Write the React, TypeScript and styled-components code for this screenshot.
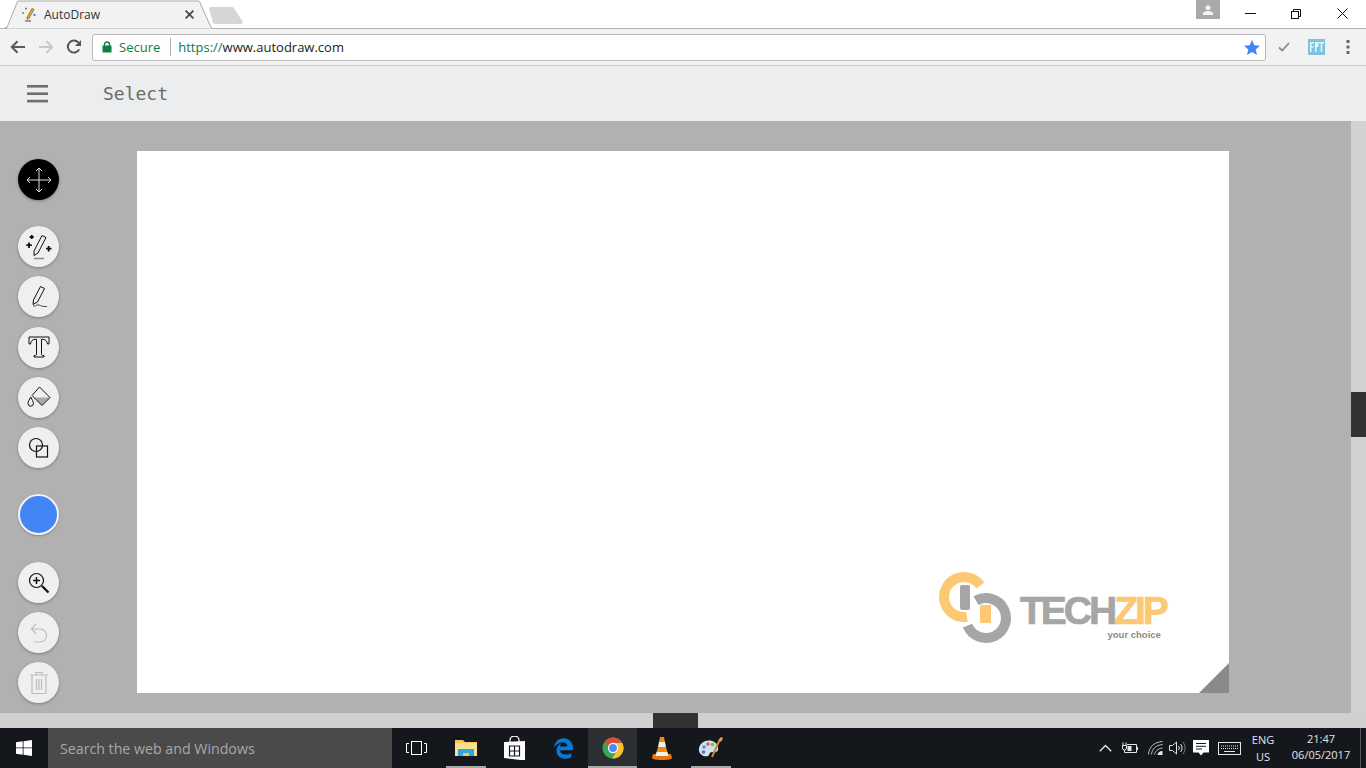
import styled, { createGlobalStyle } from 'styled-components';
import { FaEdgeLegacy } from 'react-icons/fa6';

const GlobalStyle = createGlobalStyle`
  html, body {
    margin: 0;
    padding: 0;
    overflow: hidden;
    background: #b1b1b1;
    font-family: 'Open Sans', 'Liberation Sans', sans-serif;
  }
`;

const Screen = styled.div`
  width: 1366px;
  height: 768px;
  display: flex;
  flex-direction: column;
  overflow: hidden;
`;

/* browser chrome */
const TabStrip = styled.div`
  height: 28px;
  flex-shrink: 0;
  padding-right: 1px;
  display: flex;
  background: #fff;
  border-bottom: 1px solid #b4b4b4;
`;

const Tab = styled.div`
  position: relative;
  width: 207px;
  height: 29px;
  margin-left: 5px;
  padding-left: 17px;
  box-sizing: border-box;
  display: flex;
  align-items: center;
  font-size: 12px;
  color: #333;
  z-index: 1;
`;

const TabShape = styled.svg`
  position: absolute;
  left: 0;
  top: 0;
  z-index: -1;
`;

const TabTitle = styled.span`
  margin-left: 7px;
  flex: 1;
`;

const TabClose = styled.svg`
  margin-right: 18px;
`;

const NewTab = styled.svg`
  margin: 7px 0 0 -3px;
`;

const UserBadge = styled.div`
  width: 24px;
  height: 19px;
  margin-left: auto;
  margin-right: 7px;
  background: #a9a9a9;
  display: flex;
  align-items: center;
  justify-content: center;
`;

const WindowButton = styled.div`
  width: 46px;
  height: 27px;
  display: flex;
  align-items: center;
  justify-content: center;
`;

const Toolbar = styled.div`
  height: 36px;
  flex-shrink: 0;
  padding: 0 4px;
  display: flex;
  align-items: center;
  background: #f2f2f2;
  border-bottom: 1px solid #c8c8c8;
`;

const NavSlot = styled.div`
  width: 28px;
  height: 28px;
  display: flex;
  align-items: center;
  justify-content: center;
`;

const Omnibox = styled.div`
  flex: 1;
  height: 27px;
  box-sizing: border-box;
  margin: 0 4px;
  padding: 0 5px 0 9px;
  display: flex;
  align-items: center;
  background: #fff;
  border: 1px solid #b8b8b8;
  border-radius: 3px;
  font-size: 13px;
`;

const SecureLabel = styled.span`
  margin-left: 7px;
  padding-right: 10px;
  border-right: 1px solid #b0b0b0;
  line-height: 18px;
  color: #0b8043;
`;

const Url = styled.span`
  margin-left: 7px;
  flex: 1;
  color: #222;
`;

const UrlScheme = styled.span`
  color: #0b7a50;
`;

const ExtensionGroup = styled.div`
  display: flex;
  gap: 4px;
`;

/* autodraw */
const AppBar = styled.div`
  height: 55px;
  flex-shrink: 0;
  display: flex;
  align-items: center;
  padding-left: 27px;
  box-sizing: border-box;
  background: #ecedef;
`;

const PageTitle = styled.h1`
  margin: 0 0 0 55px;
  font-family: 'DejaVu Sans Mono', 'Liberation Mono', monospace;
  font-size: 18px;
  font-weight: 400;
  color: #6a6a6a;
`;

const Workspace = styled.div`
  height: 607px;
  flex-shrink: 0;
  display: grid;
  grid-template-columns: 1351px 15px;
  grid-template-rows: 592px 15px;
`;

const Stage = styled.div`
  display: flex;
  background: #b1b1b1;
`;

const Sidebar = styled.div`
  width: 137px;
  flex-shrink: 0;
  box-sizing: border-box;
  padding: 38px 0 0 18px;
  display: flex;
  flex-direction: column;
  gap: 26px;
`;

const ToolGroup = styled.div<{ $gap: number }>`
  display: flex;
  flex-direction: column;
  gap: ${(p) => p.$gap}px;
`;

const ToolButton = styled.button<{ $active?: boolean; $off?: boolean }>`
  width: 41px;
  height: 41px;
  padding: 0;
  border: 0;
  border-radius: 50%;
  display: flex;
  align-items: center;
  justify-content: center;
  background: ${(p) => (p.$active ? '#000' : '#efefef')};
  color: ${(p) => (p.$active ? '#ddd' : p.$off ? '#bdbdbd' : '#111')};
  box-shadow: 0 1px 3px rgba(0, 0, 0, 0.3);
`;

const ColorSwatch = styled.div`
  width: 41px;
  height: 41px;
  margin-bottom: 1px;
  box-sizing: border-box;
  border-radius: 50%;
  border: 2px solid #f4f4f4;
  background: #4285f4;
  box-shadow: 0 1px 2px rgba(0, 0, 0, 0.25);
`;

const Canvas = styled.div`
  position: relative;
  width: 1092px;
  height: 542px;
  margin-top: 30px;
  background: #fff;
`;

const PageCorner = styled.div`
  position: absolute;
  right: 0;
  bottom: 0;
  width: 30px;
  height: 30px;
  background: #8a8a8a;
  clip-path: polygon(100% 0, 100% 100%, 0 100%);
`;

const Watermark = styled.div`
  position: absolute;
  left: 802px;
  top: 421px;
  display: flex;
`;

const WatermarkText = styled.div`
  margin: 24px 0 0 7px;
  display: flex;
  flex-direction: column;
  align-items: flex-end;
`;

const Brand = styled.div`
  font-family: 'Liberation Sans', Arial, sans-serif;
  font-size: 39px;
  line-height: 30px;
  font-weight: 700;
  letter-spacing: -3px;
  -webkit-text-stroke: 0.7px currentColor;
  color: #a6a6a6;
`;

const BrandAccent = styled.span`
  color: #fdc874;
`;

const Tagline = styled.div`
  margin: 3px 5px 0 0;
  font-family: 'Liberation Sans', Arial, sans-serif;
  font-size: 9.5px;
  line-height: 12px;
  font-weight: 700;
  color: #8a8a8a;
`;

const VerticalTrack = styled.div`
  background: #d2d2d2;
  padding-top: 271px;
`;

const VerticalThumb = styled.div`
  height: 45px;
  background: #333;
`;

const HorizontalTrack = styled.div`
  grid-column: 1 / 3;
  background: #d0d0d0;
  padding-left: 653px;
`;

const HorizontalThumb = styled.div`
  width: 45px;
  height: 15px;
  background: #333;
`;

/* windows taskbar */
const Taskbar = styled.div`
  height: 40px;
  flex-shrink: 0;
  display: flex;
  align-items: center;
  background: #14181d;
  color: #fff;
`;

const StartButton = styled.div`
  width: 48px;
  display: flex;
  justify-content: center;
`;

const SearchBox = styled.div`
  width: 344px;
  height: 40px;
  box-sizing: border-box;
  padding-left: 12px;
  display: flex;
  align-items: center;
  background: #4a4a4a;
  color: #a8a8a8;
  font-size: 14.2px;
`;

const TaskSlot = styled.div<{ $open?: boolean; $active?: boolean }>`
  position: relative;
  width: 49px;
  height: 40px;
  display: flex;
  align-items: center;
  justify-content: center;
  background: ${(p) => (p.$active ? '#2c2f32' : 'transparent')};
  &::after {
    content: '';
    display: ${(p) => (p.$open ? 'block' : 'none')};
    position: absolute;
    bottom: 0;
    left: ${(p) => (p.$active ? 0 : '5px')};
    right: ${(p) => (p.$active ? 0 : '4px')};
    height: 2px;
    background: #a8a8a8;
  }
`;

const Tray = styled.div`
  margin-left: auto;
  display: flex;
  align-items: center;
  height: 40px;
`;

const TraySlot = styled.div<{ $width: number }>`
  width: ${(p) => p.$width}px;
  height: 40px;
  display: flex;
  flex-direction: column;
  align-items: center;
  justify-content: center;
  font-size: 11px;
  line-height: 17px;
  color: #e4e4e4;
`;

const ClockSlot = styled(TraySlot)`
  line-height: 16px;
  padding-bottom: 2px;
  box-sizing: border-box;
`;

const ShowDesktop = styled.div`
  width: 5px;
  height: 40px;
  margin-left: 1px;
  border-left: 1px solid #555;
`;

/* drawings */
const Favicon = () => (
  <svg width="15" height="15" viewBox="0 0 15 15">
    <path d="M5 10.5 10 1.5l2 1-5 9-2 .8z" fill="#f4b400" stroke="#444" strokeWidth=".6" />
    <path d="M3 14h6" stroke="#444" strokeWidth="1" />
    <circle cx="1" cy="6" r="1" fill="#34a853" />
    <circle cx="4" cy="1.5" r="1" fill="#ea4335" />
    <circle cx="12.5" cy="8" r="1.2" fill="#4285f4" />
  </svg>
);

const BackArrow = ({ color }: { color: string }) => (
  <svg width="16" height="14" viewBox="0 0 16 14" fill="none" stroke={color} strokeWidth="2">
    <path d="M15 7H2M7.5 1.2 1.8 7l5.7 5.8" />
  </svg>
);

const ForwardArrow = ({ color }: { color: string }) => (
  <svg width="16" height="14" viewBox="0 0 16 14" fill="none" stroke={color} strokeWidth="2">
    <path d="M1 7h13M8.5 1.2 14.2 7l-5.7 5.8" />
  </svg>
);

const Reload = () => (
  <svg width="16" height="16" viewBox="0 0 16 16" fill="none">
    <path d="M13.2 10.4A6 6 0 1 1 12.4 3.600" stroke="#555" strokeWidth="2" />
    <path d="M15 1v6H9z" fill="#555" />
  </svg>
);

const Lock = () => (
  <svg width="10" height="12" viewBox="0 0 10 12">
    <path d="M2.500 5V3.500a2.500 2.500 0 0 1 5 0V5" fill="none" stroke="#0b8043" strokeWidth="1.400" />
    <rect x="0.500" y="4.500" width="9" height="7" fill="#0b8043" />
  </svg>
);

const Star = () => (
  <svg width="16" height="15" viewBox="0 0 16 15">
    <path d="M8 0l2.300 5.200 5.700.5-4.300 3.700 1.300 5.600L8 12l-5 3 1.300-5.600L0 5.700l5.700-.5z" fill="#4285f4" />
  </svg>
);

const Check = () => (
  <svg width="12" height="10" viewBox="0 0 12 10" fill="none" stroke="#8a8a8a" strokeWidth="1.800">
    <path d="M1 5.500 4.200 8.500 11 1" />
  </svg>
);

const ExtensionLogo = () => (
  <svg width="17" height="16" viewBox="0 0 17 16">
    <rect width="17" height="16" fill="#7cc4de" />
    <path d="M2 3h4v1.500H3.500V7H5.500v1.500H3.500V13H2zM7 3h3.500v5H8.500v5H7zM11 3h5v1.500h-1.700V13h-1.600V4.500H11z" fill="#e8f6fb" />
  </svg>
);

const MenuDots = () => (
  <svg width="4" height="14" viewBox="0 0 4 14" fill="#666">
    <rect x="0.500" width="3" height="3" />
    <rect x="0.500" y="5.500" width="3" height="3" />
    <rect x="0.500" y="11" width="3" height="3" />
  </svg>
);

const Hamburger = () => (
  <svg width="21" height="18" viewBox="0 0 21 18" fill="#6e6e6e">
    <rect width="21" height="2.600" />
    <rect y="7.400" width="21" height="2.600" />
    <rect y="14.800" width="21" height="2.600" />
  </svg>
);

const MoveIcon = () => (
  <svg width="26" height="26" viewBox="0 0 26 26" fill="none" stroke="currentColor" strokeWidth="1">
    <path d="M13 1v24M1 13h24M10 4l3-3 3 3M10 22l3 3 3-3M4 10l-3 3 3 3M22 10l3 3-3 3" />
  </svg>
);

const AutoDrawIcon = () => (
  <svg width="26" height="26" viewBox="0 0 26 26" fill="none" stroke="currentColor" strokeWidth="1">
    <path d="M8 17 16 1.500 20 3.500 12 19 8 21.500z" />
    <path d="M8 24.500h10" stroke="#888" strokeWidth="1.500" />
    <path d="M5.700 1v4M3.700 3h4M3 8.500v5.500M.300 11.200h5.500M22.700 12v5.500M20 14.700h5.500" strokeWidth="1.800" />
  </svg>
);

const PencilIcon = () => (
  <svg width="26" height="26" viewBox="0 0 26 26" fill="none" stroke="currentColor" strokeWidth="1">
    <path d="M7.500 16 14.500 2.500 18.500 4.500 11.500 18 7 20.500z" />
    <path d="M7 21.500c2 2 3.500-1.500 6-.5s3 1.500 8 1.500" stroke="#444" />
  </svg>
);

const TextIcon = () => (
  <svg width="22" height="22" viewBox="0 0 22 22" fill="none" stroke="currentColor" strokeWidth="1">
    <path d="M1 1h20v7h-1.500C19 5 17.500 3.200 13.500 3.200V18.500c0 .8 1 1.200 2.500 1.200V21H6v-1.300c1.500 0 2.500-.4 2.500-1.200V3.200C4.500 3.200 3 5 2.500 8H1z" />
  </svg>
);

const FillIcon = () => (
  <svg width="26" height="26" viewBox="0 0 26 26" fill="none" stroke="currentColor" strokeWidth="1">
    <path d="M8 13.500H24L16 21.500z" fill="#aaa" stroke="none" />
    <path d="M13.500 3 24 13.500 16 21.500 6 11.500z" />
    <path d="M4.700 13c-1.500 3-2.700 4.500-2.700 6.500a2.700 2.700 0 0 0 5.400 0C7.400 17.500 6.200 16 4.700 13z" />
  </svg>
);

const ShapesIcon = () => (
  <svg width="24" height="24" viewBox="0 0 24 24" fill="none" stroke="currentColor" strokeWidth="1.200">
    <circle cx="9" cy="9" r="6.500" />
    <rect x="9.500" y="10" width="11" height="11" />
  </svg>
);

const ZoomIcon = () => (
  <svg width="22" height="22" viewBox="0 0 22 22" fill="none" stroke="currentColor" strokeWidth="1.200">
    <circle cx="8.500" cy="8.500" r="7" />
    <path d="M8.500 5v7M5 8.500h7" strokeWidth="1.500" />
    <path d="M14 14l6.500 6.500" strokeWidth="2.200" />
  </svg>
);

const UndoIcon = () => (
  <svg width="20" height="22" viewBox="0 0 20 22" fill="none" stroke="currentColor" strokeWidth="1.200">
    <path d="M7 2 2.500 6.800 7 11.500M3 7h8a6.500 6.500 0 0 1 0 13H5" />
  </svg>
);

const TrashIcon = () => (
  <svg width="20" height="24" viewBox="0 0 20 24" fill="none" stroke="currentColor" strokeWidth="1.200">
    <path d="M1 4h18M7 4V1.500h6V4M3 4v18.500h14V4M7.500 8v11M10 8v11M12.500 8v11" />
  </svg>
);

const TechZipMark = () => (
  <svg width="74" height="74" viewBox="0 0 74 74" fill="none">
    <path d="M41.400 13.500A20 20 0 1 0 28 44.800" stroke="#fdc874" strokeWidth="10" />
    <path d="M37 28.700A20 20 0 1 1 28.500 53.700" stroke="#a6a6a6" strokeWidth="10" />
    <rect x="21" y="13" width="10" height="25" rx="2" fill="#a6a6a6" />
    <rect x="41" y="33" width="11" height="18" fill="#fdc874" />
  </svg>
);

const WindowsLogo = () => (
  <svg width="16" height="16" viewBox="0 0 16 16" fill="#fff">
    <path d="M0 2.300 6.700 1.300V7.500H0zM7.500 1.200 16 0v7.500H7.500zM0 8.300h6.700v6.400L0 13.700zM7.500 8.300H16V16L7.500 14.800z" />
  </svg>
);

const TaskViewIcon = () => (
  <svg width="21" height="14" viewBox="0 0 21 14" fill="none" stroke="#fff" strokeWidth="1">
    <rect x="5.500" y="0.500" width="10" height="13" />
    <path d="M3 2.500H.5v9H3M18 2.500h2.500v9H18" />
  </svg>
);

const ExplorerIcon = () => (
  <svg width="22" height="18" viewBox="0 0 22 18">
    <path d="M0 1h8l2 2h12v14H0z" fill="#f3c75a" />
    <path d="M0 4h22v13H0z" fill="#fbe08c" />
    <path d="M3 10h16v7h-5v-3H8v3H3z" fill="#29abe2" />
    <path d="M8 14h6v3H8z" fill="#f3c75a" />
  </svg>
);

const StoreIcon = () => (
  <svg width="22" height="24" viewBox="0 0 22 24" fill="#fff">
    <path d="M6 6V4a4 3.500 0 0 1 9 0v2" fill="none" stroke="#fff" strokeWidth="1.200" />
    <path d="M0 6l21-1v19l-3 .2L0 22z" />
    <path d="M5.500 10h10v10h-10zM10.500 10v10M5.500 15h10" fill="none" stroke="#14181d" strokeWidth="1.200" />
  </svg>
);

const ChromeIcon = () => (
  <svg width="22" height="22" viewBox="0 0 24 24">
    <circle cx="12" cy="12" r="11.500" fill="#34a853" />
    <path d="M21.960 6.250A11.500 11.500 0 0 1 10.800 23.440L16.800 14.750 12 6.500z" fill="#fbc02d" />
    <path d="M3.200 4.600A11.500 11.500 0 0 1 21.960 6.250H12a5.500 5.500 0 0 0-4.800 8.300z" fill="#dd4b39" />
    <circle cx="12" cy="12" r="5.600" fill="#fff" />
    <circle cx="12" cy="12" r="4.300" fill="#4e8df5" />
  </svg>
);

const VlcIcon = () => (
  <svg width="20" height="24" viewBox="0 0 20 24">
    <path d="M1 18h18l1 4c0 1-4 2-10 2S0 23 0 22z" fill="#e8770f" />
    <path d="M8 1h4l1 5H7z" fill="#f08a12" />
    <path d="M7 6h6l1 5H6z" fill="#f4f0e8" />
    <path d="M6 11h8l1.500 5H4.500z" fill="#f08a12" />
    <path d="M4.500 16h11l1 4h-13z" fill="#f4f0e8" />
  </svg>
);

const PaintIcon = () => (
  <svg width="25" height="24" viewBox="0 0 25 24">
    <path d="M1 15C0 8 7 3 14 5c4 1 7 5 6 9-1 3-4 2-6 2-3 0-2 3-4 4-4 1-8-1-9-5z" fill="#d3e2ea" />
    <circle cx="6" cy="11" r="1.800" fill="#3f9de0" />
    <circle cx="10" cy="8" r="1.800" fill="#e45f4a" />
    <circle cx="14.500" cy="8.500" r="1.800" fill="#7cbf4a" />
    <circle cx="5.500" cy="16" r="1.800" fill="#5a6fd0" />
    <path d="M14 21 22 3" stroke="#c98a2e" strokeWidth="2" />
    <path d="M21 4l2-3 2 1-2 4z" fill="#e0a84a" />
  </svg>
);

const CaretUp = () => (
  <svg width="13" height="8" viewBox="0 0 13 8" fill="none" stroke="#e6e6e6" strokeWidth="1.300">
    <path d="M.8 7.300 6.500 1.500l5.700 5.800" />
  </svg>
);

const BatteryIcon = () => (
  <svg width="16" height="13" viewBox="0 0 16 13" fill="none" stroke="#e6e6e6">
    <path d="M1 .5v3M4 .5v3M.5 3.500h4V6a2 2 0 0 1-4 0zM2.500 8v2.500H5" />
    <path d="M5 2.500h9.500v8H5" />
    <rect x="5.500" y="4" width="4" height="5" fill="#e6e6e6" stroke="none" />
    <path d="M15.500 5v3" />
  </svg>
);

const WifiIcon = () => (
  <svg width="15" height="14" viewBox="0 0 15 14" fill="none" stroke="#bdbdbd">
    <path d="M.5 13.500C1 6 6 1 14.500.5M3.500 13.500C4 8 8 4 14.500 3.500M6.500 13.500C7 10.500 10 7.500 14.500 7" />
    <path d="M9.500 14c0-2 2-4 5-4v4z" fill="#e6e6e6" stroke="none" />
  </svg>
);

const VolumeIcon = () => (
  <svg width="17" height="14" viewBox="0 0 17 14" fill="none" stroke="#e6e6e6">
    <path d="M.5 4.500h3L7.500 1v12L3.500 9.500h-3z" />
    <path d="M9.500 5a3 3 0 0 1 0 4M11.500 3a6 6 0 0 1 0 8" />
    <path d="M14 1a9.500 9.500 0 0 1 0 12" stroke="#777" />
  </svg>
);

const NotificationIcon = () => (
  <svg width="16" height="16" viewBox="0 0 16 16">
    <path d="M0 0h16v12.500h-5.500L8 15.500l-2.500-3H0z" fill="#fff" />
    <path d="M3 3.500h10M3 6.300h10M3 9h6" stroke="#14181d" />
  </svg>
);

const KeyboardIcon = () => (
  <svg width="23" height="13" viewBox="0 0 23 13" fill="none" stroke="#e6e6e6">
    <rect x="0.500" y="0.500" width="22" height="12" />
    <path d="M3 4h17M3 6.500h17" strokeDasharray="1 1" />
    <path d="M6 9.500h11" />
  </svg>
);

const tools = [AutoDrawIcon, PencilIcon, TextIcon, FillIcon, ShapesIcon];

export default function App() {
  return (
    <Screen>
      <GlobalStyle />
      <TabStrip>
        <Tab>
          <TabShape width="207" height="29" viewBox="0 0 207 29">
            <path d="M2 28.500 12.500 1.500Q13 1 14 1H193q1 0 1.500.5L207 28.500z" fill="#f2f2f2" />
            <path d="M0 27.500H2L12.500 1.500Q13 1 14 1H193q1 0 1.500.5L206 27.500h1" fill="none" stroke="#aaa" />
          </TabShape>
          <Favicon />
          <TabTitle>AutoDraw</TabTitle>
          <TabClose width="9" height="9" viewBox="0 0 9 9" stroke="#444" strokeWidth="1.700">
            <path d="M.6.600l7.800 7.800M8.400.600 .6 8.400" />
          </TabClose>
        </Tab>
        <NewTab width="34" height="17" viewBox="0 0 34 17">
          <path d="M2 0H23q1.500 0 2 1.500L34 15q0 2-2 2H6q-1.500 0-2-1.500L0 2q0-2 2-2z" fill="#d6d6d6" />
        </NewTab>
        <UserBadge>
          <svg width="10" height="10" viewBox="0 0 10 10" fill="#f2f2f2">
            <circle cx="5" cy="2.800" r="2.500" />
            <path d="M0 10V8c0-1 3-2 5-2s5 1 5 2v2z" />
          </svg>
        </UserBadge>
        <WindowButton>
          <svg width="11" height="1" viewBox="0 0 11 1"><rect width="11" height="1" fill="#111" /></svg>
        </WindowButton>
        <WindowButton>
          <svg width="10" height="10" viewBox="0 0 10 10" fill="none" stroke="#111">
            <rect x="0.500" y="2.500" width="7" height="7" />
            <path d="M2.500 2.500v-2h7v7h-2" />
          </svg>
        </WindowButton>
        <WindowButton>
          <svg width="11" height="11" viewBox="0 0 11 11" stroke="#111">
            <path d="M.5.500l10 10M10.500.500l-10 10" />
          </svg>
        </WindowButton>
      </TabStrip>

      <Toolbar>
        <NavSlot><BackArrow color="#5a5a5a" /></NavSlot>
        <NavSlot><ForwardArrow color="#c8c8c8" /></NavSlot>
        <NavSlot><Reload /></NavSlot>
        <Omnibox>
          <Lock />
          <SecureLabel>Secure</SecureLabel>
          <Url><UrlScheme>https://</UrlScheme>www.autodraw.com</Url>
          <Star />
        </Omnibox>
        <ExtensionGroup>
          <NavSlot><Check /></NavSlot>
          <NavSlot><ExtensionLogo /></NavSlot>
          <NavSlot><MenuDots /></NavSlot>
        </ExtensionGroup>
      </Toolbar>

      <AppBar>
        <Hamburger />
        <PageTitle>Select</PageTitle>
      </AppBar>

      <Workspace>
        <Stage>
          <Sidebar>
            <ToolButton $active><MoveIcon /></ToolButton>
            <ToolGroup $gap={9.33}>
              {tools.map((Icon, i) => (
                <ToolButton key={i}><Icon /></ToolButton>
              ))}
            </ToolGroup>
            <ColorSwatch />
            <ToolGroup $gap={9}>
              <ToolButton><ZoomIcon /></ToolButton>
              <ToolButton $off><UndoIcon /></ToolButton>
              <ToolButton $off><TrashIcon /></ToolButton>
            </ToolGroup>
          </Sidebar>
          <Canvas>
            <Watermark>
              <TechZipMark />
              <WatermarkText>
                <Brand>TECH<BrandAccent>ZIP</BrandAccent></Brand>
                <Tagline>your choice</Tagline>
              </WatermarkText>
            </Watermark>
            <PageCorner />
          </Canvas>
        </Stage>
        <VerticalTrack><VerticalThumb /></VerticalTrack>
        <HorizontalTrack><HorizontalThumb /></HorizontalTrack>
      </Workspace>

      <Taskbar>
        <StartButton><WindowsLogo /></StartButton>
        <SearchBox>Search the web and Windows</SearchBox>
        <TaskSlot><TaskViewIcon /></TaskSlot>
        <TaskSlot $open><ExplorerIcon /></TaskSlot>
        <TaskSlot><StoreIcon /></TaskSlot>
        <TaskSlot><FaEdgeLegacy size={21} color="#0a78d7" /></TaskSlot>
        <TaskSlot $open $active><ChromeIcon /></TaskSlot>
        <TaskSlot><VlcIcon /></TaskSlot>
        <TaskSlot $open><PaintIcon /></TaskSlot>
        <Tray>
          <TraySlot $width={24}><CaretUp /></TraySlot>
          <TraySlot $width={26}><BatteryIcon /></TraySlot>
          <TraySlot $width={24}><WifiIcon /></TraySlot>
          <TraySlot $width={20}><VolumeIcon /></TraySlot>
          <TraySlot $width={28}><NotificationIcon /></TraySlot>
          <TraySlot $width={28}><KeyboardIcon /></TraySlot>
          <TraySlot $width={40}><span>ENG</span><span>US</span></TraySlot>
          <ClockSlot $width={76}><span>21:47</span><span>06/05/2017</span></ClockSlot>
          <ShowDesktop />
        </Tray>
      </Taskbar>
    </Screen>
  );
}
